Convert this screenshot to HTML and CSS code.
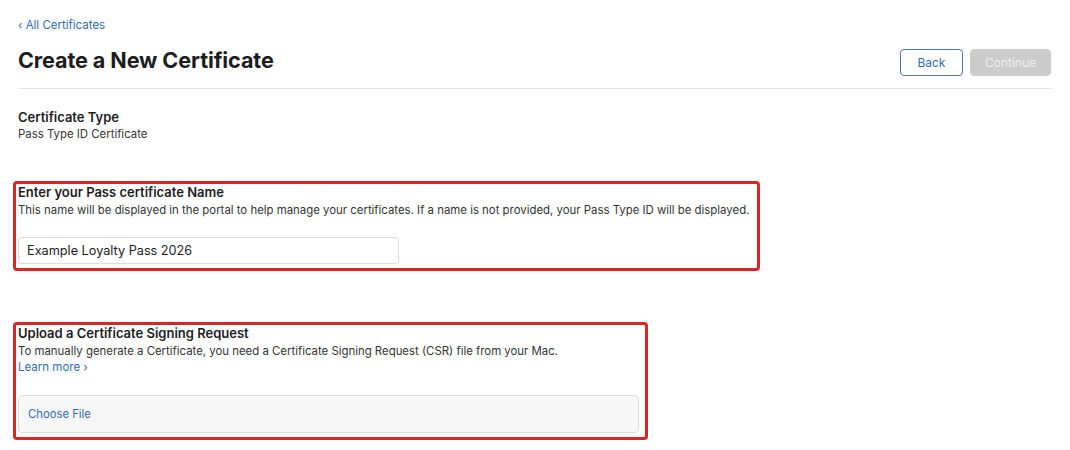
FILE: index.html
```html
<!DOCTYPE html>
<html lang="en">
<head>
  <meta charset="UTF-8">
  <meta name="viewport" content="width=device-width, initial-scale=1.0">
  <title>Create a New Certificate</title>
  <link rel="stylesheet" href="styles.css">
</head>
<body>
  <div class="page">
    <a class="back-link" href="#">&lsaquo; All Certificates</a>

    <div class="header">
      <h1>Create a New Certificate</h1>
      <div class="actions">
        <button class="btn">Back</button>
        <button class="btn disabled" disabled>Continue</button>
      </div>
    </div>

    <div class="section cert-type">
      <div class="section-title">Certificate Type</div>
      <div class="section-text">Pass Type ID Certificate</div>
    </div>

    <div class="section highlight name-box">
      <div class="section-title">Enter your Pass certificate Name</div>
      <div class="section-text">This name will be displayed in the portal to help manage your certificates. If a name is not provided, your Pass Type ID will be displayed.</div>
      <input class="text-input" type="text" value="Example Loyalty Pass 2026">
    </div>

    <div class="section highlight upload-box">
      <div class="section-title">Upload a Certificate Signing Request</div>
      <div class="section-text">To manually generate a Certificate, you need a Certificate Signing Request (CSR) file from your Mac.</div>
      <a class="learn-more" href="#">Learn more &rsaquo;</a>
      <div class="file-picker">
        <span class="choose-file">Choose File</span>
      </div>
    </div>
  </div>
</body>
</html>
```

FILE: styles.css
```css
body {
  margin: 0;
  font-family: Inter, "Noto Sans", "Liberation Sans", sans-serif;
  background: #ffffff;
  color: #1d1d1f;
}

.page {
  padding: 17px 18px 0;
}

a {
  color: #2f6db5;
  text-decoration: none;
}

.back-link {
  display: block;
  font-size: 11.5px;
  line-height: 16px;
}

.header {
  display: flex;
  align-items: flex-start;
  justify-content: space-between;
  margin-top: 14px;
  padding-bottom: 12px;
  border-bottom: 1px solid #e6e6e6;
}

h1 {
  margin: 0;
  font-size: 21.6px;
  line-height: 26px;
  font-weight: 700;
  letter-spacing: -0.1px;
}

.actions {
  display: flex;
  gap: 7px;
  margin-top: 2px;
  margin-right: 1px;
}

.btn {
  height: 27px;
  padding: 0 16.5px;
  border: 1px solid #4f78ac;
  border-radius: 4px;
  background: #ffffff;
  color: #2f6db5;
  font-family: inherit;
  font-size: 12px;
}

.btn.disabled {
  border-color: #cccccc;
  background: #cccccc;
  color: #eeeeee;
  padding: 0 14px;
}

.section-title {
  font-size: 13px;
  font-weight: 600;
  line-height: 17px;
}

.section-text {
  font-size: 11.4px;
  line-height: 16px;
  color: #333333;
}

.cert-type {
  margin-top: 20px;
}

.highlight {
  margin-left: -5px;
  padding: 0 2px 4px;
  border: 3px solid #dc2424;
  border-radius: 4px;
}

.highlight .section-title {
  line-height: 16px;
  margin-bottom: 2px;
}

.name-box {
  width: 737px;
  margin-top: 39px;
}

.text-input {
  display: block;
  box-sizing: border-box;
  width: 381px;
  height: 27px;
  margin-top: 19px;
  padding: 0 8px;
  border: 1px solid #dcdcdc;
  border-radius: 3px;
  font-family: inherit;
  font-size: 12.7px;
  color: #1d1d1f;
}

.upload-box {
  width: 625px;
  margin-top: 51px;
}

.learn-more {
  display: block;
  font-size: 11.5px;
  line-height: 16px;
}

.file-picker {
  box-sizing: border-box;
  margin-top: 20px;
  margin-right: 4px;
  height: 38px;
  display: flex;
  align-items: center;
  padding: 0 9px;
  border: 1px solid #dddddd;
  border-radius: 4px;
  background: #f7f7f7;
}

.choose-file {
  font-size: 11.3px;
  color: #2f6db5;
}
```
